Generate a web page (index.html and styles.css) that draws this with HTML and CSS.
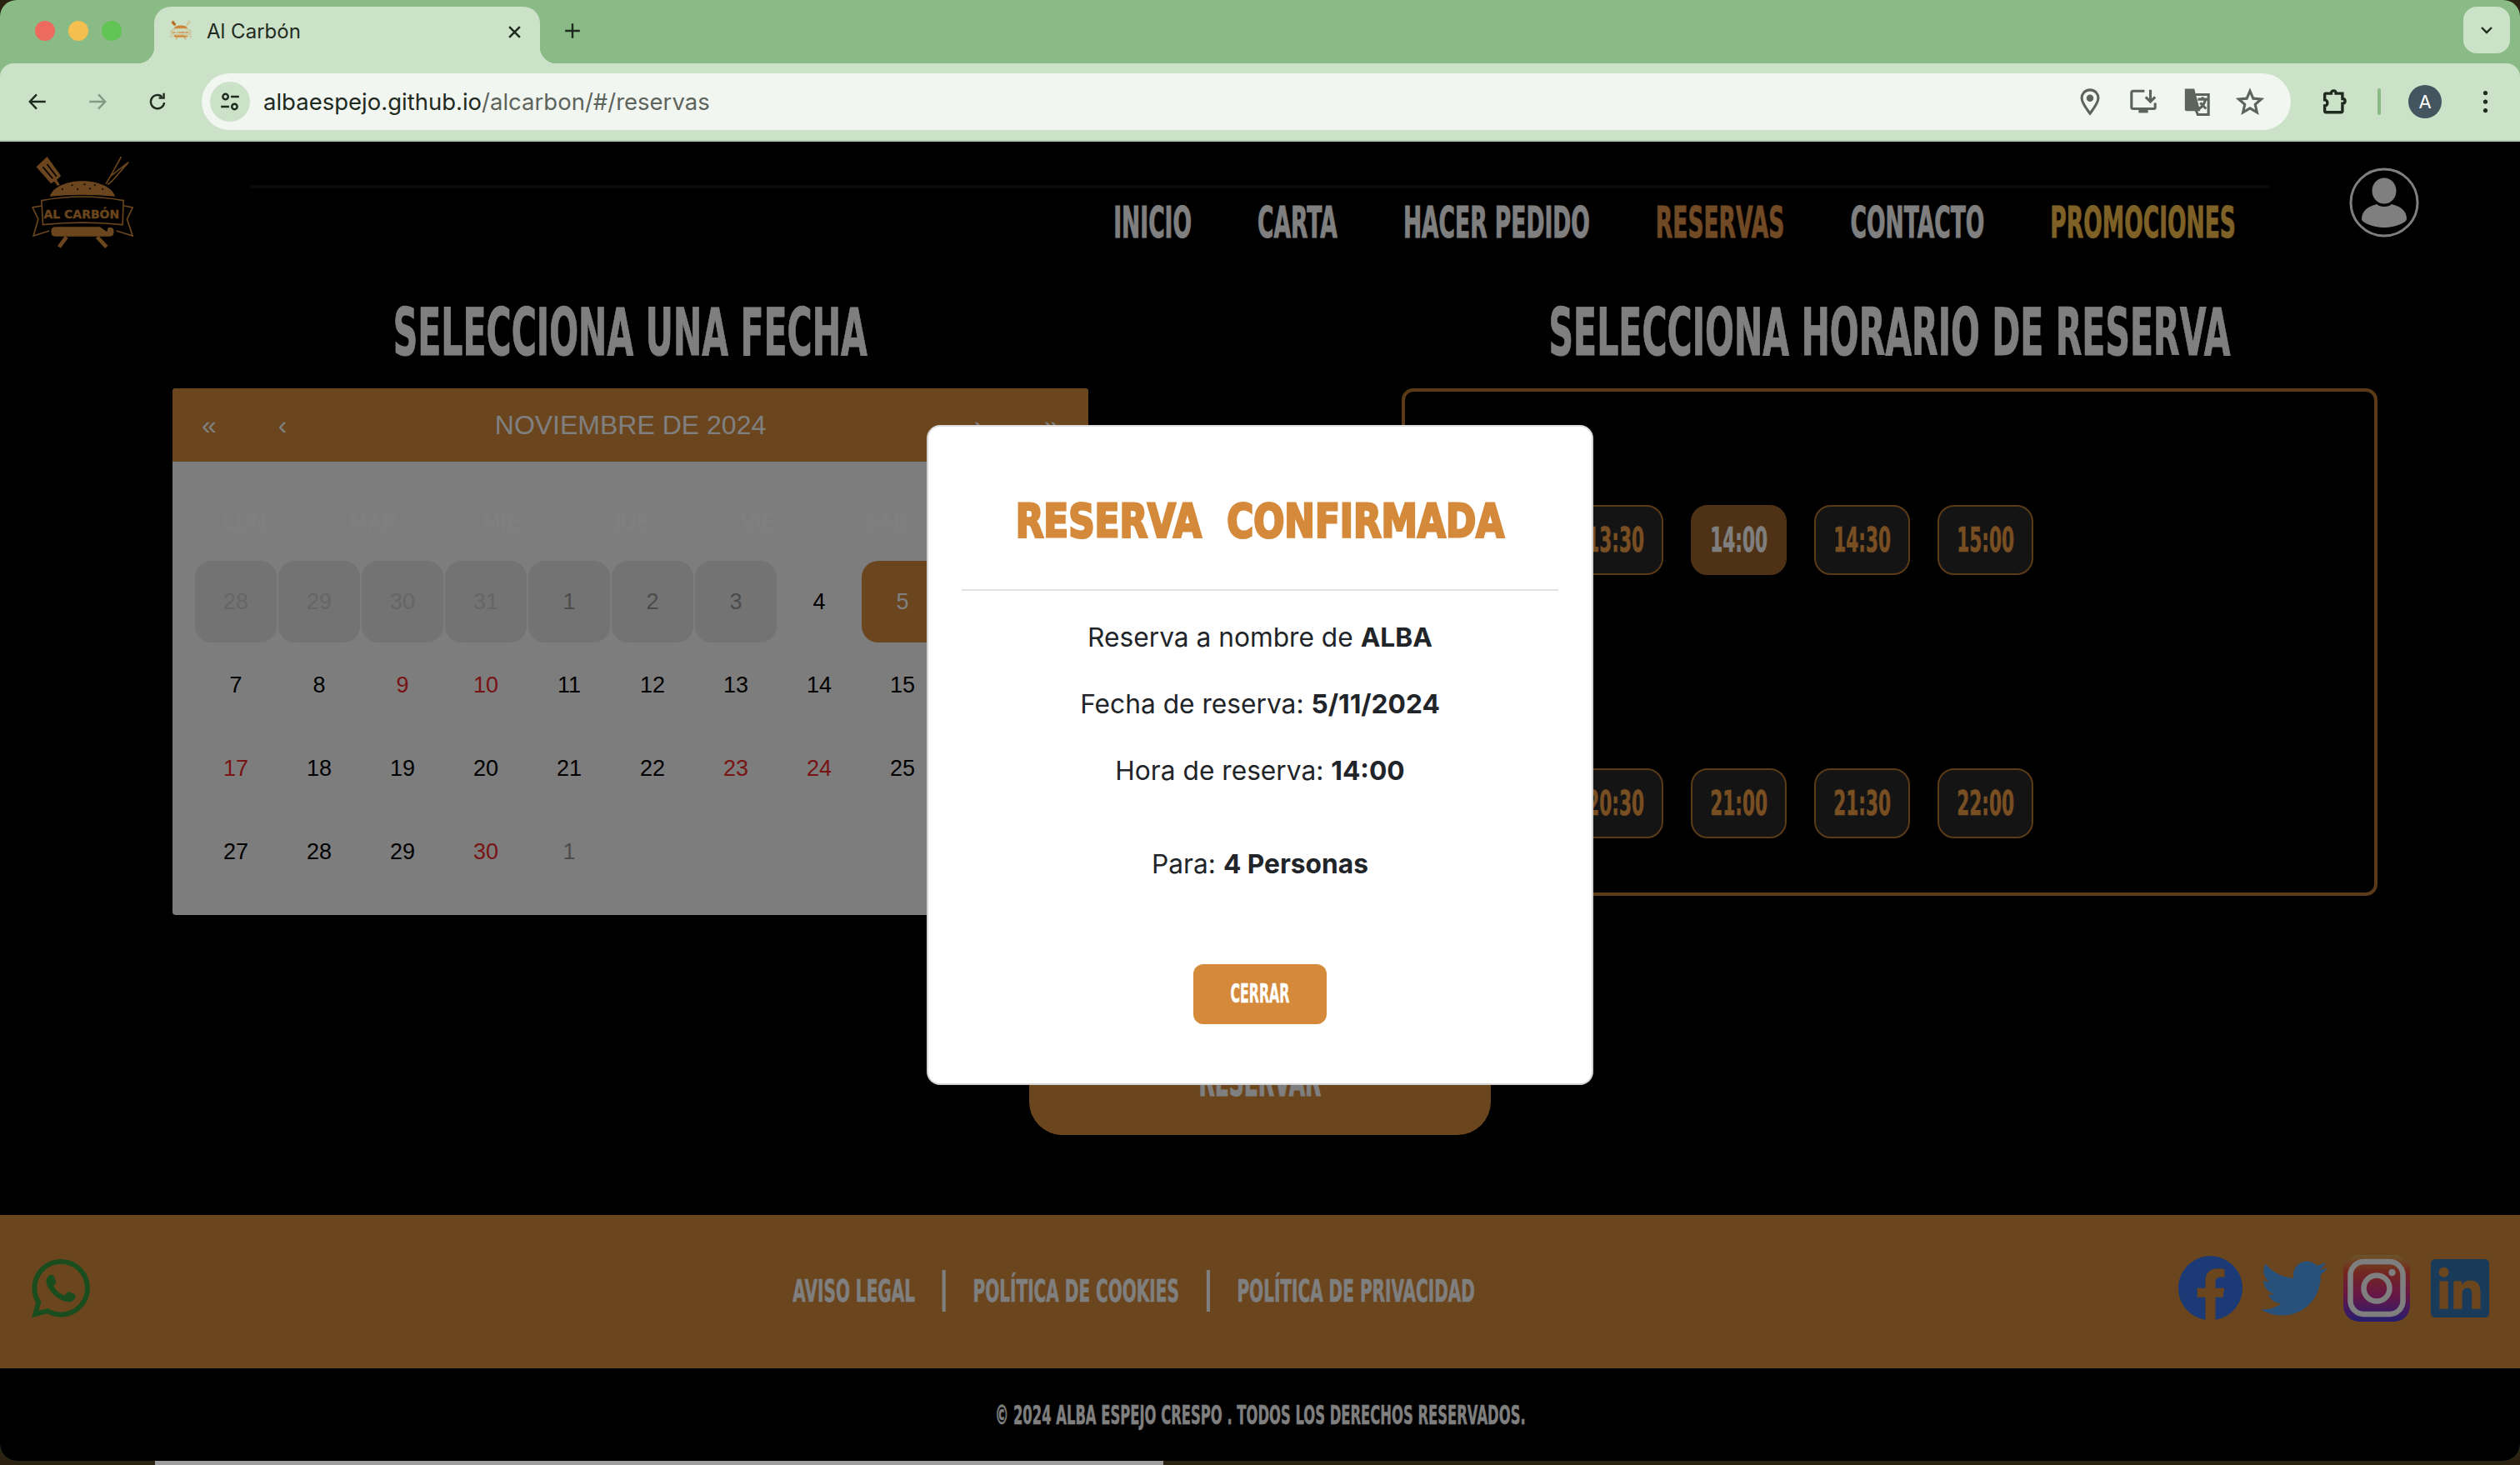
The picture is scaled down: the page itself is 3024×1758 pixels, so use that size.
FILE: index.html
```html
<!DOCTYPE html>
<html lang="es">
<head>
  <meta charset="UTF-8">
  <title>Al Carbón</title>
  <link rel="stylesheet" href="styles.css">
</head>
<body>

<svg class="defs" width="0" height="0">
  <symbol id="logo" viewBox="115 55 365 330">
    <path fill="currentColor" d="M131 92 170 55 220 124 205 138 216 156 208 160 196 144 184 152Z"/>
    <path stroke="#000" stroke-width="5" fill="none" d="M155 92 190 134M170 82 204 126"/>
    <path stroke="currentColor" stroke-width="5" fill="none" d="M382 153 398 126 437 55M398 126 463 75 405 142 388 156"/>
    <path fill="currentColor" d="M180 198C190 165 240 143 297 143 355 143 405 165 415 198 340 190 250 190 180 198Z"/>
    <g fill="#000"><circle cx="225" cy="172" r="3"/><circle cx="260" cy="158" r="3"/><circle cx="280" cy="172" r="3"/><circle cx="305" cy="155" r="3"/><circle cx="325" cy="170" r="3"/><circle cx="342" cy="157" r="3"/><circle cx="370" cy="172" r="3"/></g>
    <g fill="none" stroke="currentColor" stroke-width="5">
      <path d="M150 213Q297 185 445 213L442 300Q297 285 155 300Z"/>
      <path d="M150 232 118 238 138 280 121 340 178 322M447 232 478 238 458 280 478 340 420 322"/>
    </g>
    <text class="logo-word" x="158" y="276" textLength="272" lengthAdjust="spacingAndGlyphs" fill="currentColor">AL CARBÓN</text>
    <path fill="currentColor" d="M185 322Q185 308 200 308H360L385 325 390 310H398Q410 310 410 322V328Q410 342 396 342H199Q185 342 185 328Z"/>
    <path stroke="currentColor" stroke-width="14" d="M240 344 213 380M350 344 384 380"/>
  </symbol>
</svg>

<div class="wallpaper">
  <span class="wall-seg"></span>
</div>

<div class="window">

  <div class="tabstrip">
    <div class="lights">
      <span class="light light-close"></span>
      <span class="light light-min"></span>
      <span class="light light-max"></span>
    </div>
    <div class="tab">
      <svg class="favicon"><use href="#logo"/></svg>
      <span class="tab-title">Al Carbón</span>
      <svg class="tab-close" viewBox="0 0 16 16"><path d="M2 2 14 14M14 2 2 14"/></svg>
    </div>
    <svg class="new-tab" viewBox="0 0 20 20"><path d="M10 2V18M2 10H18"/></svg>
    <div class="tab-search">
      <svg viewBox="0 0 16 16"><path d="M2 5 8 11 14 5"/></svg>
    </div>
  </div>

  <div class="toolbar">
    <svg class="tb-icon" viewBox="0 0 24 24"><path d="M21 12H4M11 4 3.500 12 11 20"/></svg>
    <svg class="tb-icon dim" viewBox="0 0 24 24"><path d="M3 12H20M13 4 20.500 12 13 20"/></svg>
    <svg class="tb-icon" viewBox="0 0 24 24"><path d="M19.500 13A7.500 7.500 0 1 1 17 6.500M19 2.500V8H13.500"/></svg>
    <div class="omnibox">
      <span class="site-chip">
        <svg viewBox="0 0 24 24"><circle cx="7" cy="6.500" r="3"/><path d="M13 6.500H22M2 17.500H11"/><circle cx="17" cy="17.500" r="3"/></svg>
      </span>
      <span class="url"><span class="url-host">albaespejo.github.io</span>/alcarbon/#/reservas</span>
      <div class="omni-actions">
        <svg class="omni-icon" viewBox="0 0 24 24"><path d="M12 2C7.500 2 5 5.500 5 9c0 4 4 9 7 13 3-4 7-9 7-13 0-3.500-2.500-7-7-7Z"/><circle class="solid" cx="12" cy="9" r="3"/></svg>
        <svg class="omni-icon" viewBox="0 0 24 24"><path d="M13 3H3.500Q2 3 2 4.500V17Q2 18 3.500 18H21Q22 18 22 17V13M18 2V11M14 8 18 12 22 8"/><path class="solid" d="M8 18H16V21.500H8Z"/></svg>
        <svg class="omni-icon" viewBox="0 0 24 24"><path class="solid" d="M2 1H10L15 20H3.500Q2 20 2 18.500Z"/><path d="M11 6H22V23H13L11 18M13 10H21M17 8V10M19.500 10C18.500 14 16 17 14 18M15 13 20 18"/></svg>
        <svg class="omni-icon" viewBox="0 0 24 24"><path d="M12 3 14.700 9.300 21.500 9.900 16.400 14.400 17.900 21 12 17.500 6.100 21 7.600 14.400 2.500 9.900 9.300 9.300Z"/></svg>
      </div>
    </div>
    <svg class="tb-icon puzzle" viewBox="0 0 24 24"><path d="M5 5H9.500C9.500 2 13.500 2 13.500 5H19V9.500C22 9.500 22 13.500 19 13.500V20Q19 21 18 21H5Q4 21 4 20V15.500C7 15.500 7 10.500 4 10.500V6Q4 5 5 5Z"/></svg>
    <span class="tb-sep"></span>
    <span class="avatar">A</span>
    <svg class="tb-dots" viewBox="0 0 8 32"><circle cx="4" cy="4" r="3"/><circle cx="4" cy="16" r="3"/><circle cx="4" cy="28" r="3"/></svg>
  </div>

  <div class="site">
    <header class="site-header">
      <a class="logo"><svg><use href="#logo"/></svg></a>
      <div class="nav-wrap">
        <nav class="nav">
          <a>INICIO</a>
          <a>CARTA</a>
          <a>HACER PEDIDO</a>
          <a class="current">RESERVAS</a>
          <a>CONTACTO</a>
          <a class="promo">PROMOCIONES</a>
        </nav>
      </div>
      <svg class="profile" viewBox="0 0 84 84">
        <circle class="ring" cx="42" cy="42" r="40"/>
        <ellipse cx="42" cy="28" rx="14.500" ry="15.500"/>
        <path d="M15 62C15 50 26 46 33 44 37 48 47 48 51 44 59 46 69 50 69 62 69 66 55 72 42 72 29 72 15 66 15 62Z"/>
      </svg>
    </header>

    <main>
      <div class="booking">
        <section class="col-date">
          <h2><span>SELECCIONA UNA FECHA</span></h2>
          <div class="calendar">
            <div class="cal-nav">
              <button>«</button>
              <button>‹</button>
              <span class="cal-label">NOVIEMBRE DE 2024</span>
              <button>›</button>
              <button>»</button>
            </div>
            <div class="weekdays">
              <abbr title="lunes">LUN</abbr>
              <abbr title="martes">MAR</abbr>
              <abbr title="miércoles">MIÉ</abbr>
              <abbr title="jueves">JUE</abbr>
              <abbr title="viernes">VIE</abbr>
              <abbr title="sábado">SÁB</abbr>
              <abbr title="domingo">DOM</abbr>
            </div>
            <div class="days">
              <span class="day off faint">28</span>
              <span class="day off faint">29</span>
              <span class="day off faint">30</span>
              <span class="day off faint">31</span>
              <span class="day off">1</span>
              <span class="day off">2</span>
              <span class="day off">3</span>
              <span class="day">4</span>
              <span class="day picked">5</span>
              <span class="day">6</span>
              <span class="day">7</span>
              <span class="day">8</span>
              <span class="day holiday">9</span>
              <span class="day holiday">10</span>
              <span class="day">11</span>
              <span class="day">12</span>
              <span class="day">13</span>
              <span class="day">14</span>
              <span class="day">15</span>
              <span class="day">16</span>
              <span class="day holiday">17</span>
              <span class="day">18</span>
              <span class="day">19</span>
              <span class="day">20</span>
              <span class="day">21</span>
              <span class="day">22</span>
              <span class="day holiday">23</span>
              <span class="day holiday">24</span>
              <span class="day">25</span>
              <span class="day">26</span>
              <span class="day">27</span>
              <span class="day">28</span>
              <span class="day">29</span>
              <span class="day holiday">30</span>
              <span class="day next">1</span>
            </div>
          </div>
        </section>

        <section class="col-time">
          <h2><span>SELECCIONA HORARIO DE RESERVA</span></h2>
          <div class="hours">
            <div class="hour-row">
              <button class="hour"><span>13:00</span></button>
              <button class="hour"><span>13:30</span></button>
              <button class="hour picked"><span>14:00</span></button>
              <button class="hour"><span>14:30</span></button>
              <button class="hour"><span>15:00</span></button>
            </div>
            <div class="hour-row">
              <button class="hour"><span>20:00</span></button>
              <button class="hour"><span>20:30</span></button>
              <button class="hour"><span>21:00</span></button>
              <button class="hour"><span>21:30</span></button>
              <button class="hour"><span>22:00</span></button>
            </div>
          </div>
        </section>
      </div>
      <div class="reserve-row">
        <button class="reserve"><span>RESERVAR</span></button>
      </div>
    </main>

    <footer class="site-footer">
      <svg class="whatsapp" viewBox="0 0 24 24"><path d="M17.472 14.382c-.297-.149-1.758-.867-2.03-.967-.273-.099-.471-.148-.67.15-.197.297-.767.966-.94 1.164-.173.199-.347.223-.644.075-.297-.15-1.255-.463-2.39-1.475-.883-.788-1.48-1.761-1.653-2.059-.173-.297-.018-.458.13-.606.134-.133.298-.347.446-.52.149-.174.198-.298.298-.497.099-.198.05-.371-.025-.52-.075-.149-.669-1.612-.916-2.207-.242-.579-.487-.5-.669-.51-.173-.008-.371-.01-.57-.01-.198 0-.52.074-.792.372-.272.297-1.04 1.016-1.04 2.479 0 1.462 1.065 2.875 1.213 3.074.149.198 2.096 3.2 5.077 4.487.709.306 1.262.489 1.694.625.712.227 1.36.195 1.871.118.571-.085 1.758-.719 2.006-1.413.248-.694.248-1.289.173-1.413-.074-.124-.272-.198-.57-.347m-5.421 7.403h-.004a9.87 9.87 0 01-5.031-1.378l-.361-.214-3.741.982.998-3.648-.235-.374a9.86 9.86 0 01-1.51-5.26c.001-5.45 4.436-9.884 9.888-9.884 2.64 0 5.122 1.03 6.988 2.898a9.825 9.825 0 012.893 6.994c-.003 5.45-4.437 9.884-9.885 9.884m8.413-18.297A11.815 11.815 0 0012.05 0C5.495 0 .16 5.335.157 11.892c0 2.096.547 4.142 1.588 5.945L.057 24l6.305-1.654a11.882 11.882 0 005.683 1.448h.005c6.554 0 11.89-5.335 11.893-11.893a11.821 11.821 0 00-3.48-8.413Z"/></svg>
      <div class="legal">
        <a>AVISO LEGAL</a>
        <i></i>
        <a>POLÍTICA DE COOKIES</a>
        <i></i>
        <a>POLÍTICA DE PRIVACIDAD</a>
      </div>
      <div class="social">
        <svg class="fb" viewBox="0 0 24 24"><path d="M24 12.073c0-6.627-5.373-12-12-12s-12 5.373-12 12c0 5.99 4.388 10.954 10.125 11.854v-8.385H7.078v-3.47h3.047V9.43c0-3.007 1.792-4.669 4.533-4.669 1.312 0 2.686.235 2.686.235v2.953H15.83c-1.491 0-1.956.925-1.956 1.874v2.25h3.328l-.532 3.47h-2.796v8.385C19.612 23.027 24 18.062 24 12.073z"/></svg>
        <svg class="tw" viewBox="0 0 24 24"><path d="M23.953 4.57a10 10 0 01-2.825.775 4.958 4.958 0 002.163-2.723c-.951.555-2.005.959-3.127 1.184a4.92 4.92 0 00-8.384 4.482C7.69 8.095 4.067 6.13 1.64 3.162a4.822 4.822 0 00-.666 2.475c0 1.71.87 3.213 2.188 4.096a4.904 4.904 0 01-2.228-.616v.06a4.923 4.923 0 003.946 4.827 4.996 4.996 0 01-2.212.085 4.936 4.936 0 004.604 3.417 9.867 9.867 0 01-6.102 2.105c-.39 0-.779-.023-1.17-.067a13.995 13.995 0 007.557 2.209c9.053 0 13.998-7.496 13.998-13.985 0-.21 0-.42-.015-.63A9.935 9.935 0 0024 4.59z"/></svg>
        <svg class="ig" viewBox="0 0 80 80">
          <defs>
            <linearGradient id="ig-grad" x1="0" y1="0" x2="0" y2="1">
              <stop offset="0" stop-color="#d8a850"/>
              <stop offset=".25" stop-color="#e8503c"/>
              <stop offset=".6" stop-color="#d02c8c"/>
              <stop offset="1" stop-color="#4a3ce0"/>
            </linearGradient>
          </defs>
          <rect width="80" height="80" rx="19" fill="url(#ig-grad)"/>
          <rect x="8.500" y="8" width="63" height="63" rx="16" fill="none" stroke="#fff" stroke-width="6.500"/>
          <circle cx="40" cy="40" r="15.500" fill="none" stroke="#fff" stroke-width="6.500"/>
          <circle cx="58.500" cy="21" r="4.200" fill="#fff"/>
        </svg>
        <svg class="in" viewBox="0 0 24 24"><path d="M20.447 20.452h-3.554v-5.569c0-1.328-.027-3.037-1.852-3.037-1.853 0-2.136 1.445-2.136 2.939v5.667H9.351V9h3.414v1.561h.046c.477-.9 1.637-1.85 3.37-1.85 3.601 0 4.267 2.37 4.267 5.455v6.286zM5.337 7.433a2.062 2.062 0 01-2.063-2.065 2.064 2.064 0 112.063 2.065zm1.782 13.019H3.555V9h3.564v11.452zM22.225 0H1.771C.792 0 0 .774 0 1.729v20.542C0 23.227.792 24 1.771 24h20.451C23.2 24 24 23.227 24 22.271V1.729C24 .774 23.2 0 22.222 0h.003z"/></svg>
      </div>
    </footer>

    <div class="copyright"><span>© 2024 ALBA ESPEJO CRESPO . TODOS LOS DERECHOS RESERVADOS.</span></div>

    <div class="overlay">
      <div class="modal">
        <div class="modal-head">
          <h3><span>RESERVA&nbsp;&nbsp;CONFIRMADA</span></h3>
        </div>
        <div class="modal-body">
          <p>Reserva a nombre de <b>ALBA</b></p>
          <p>Fecha de reserva: <b>5/11/2024</b></p>
          <p>Hora de reserva: <b>14:00</b></p>
          <p class="party">Para: <b>4 Personas</b></p>
          <button class="close"><span>CERRAR</span></button>
        </div>
      </div>
    </div>
  </div>
</div>

</body>
</html>
```

FILE: styles.css
```css
* { box-sizing: border-box; }
html, body { margin: 0; height: 100%; }
body {
  position: relative;
  overflow: hidden;
  background: #2a2110;
  font-family: "Liberation Sans", sans-serif;
}
button { border: 0; padding: 0; font: inherit; cursor: pointer; }
.defs { position: absolute; }

.wallpaper {
  position: absolute;
  left: 0;
  right: 0;
  bottom: 0;
  height: 6px;
  padding-left: 186px;
  display: flex;
}
.wall-seg { width: 1210px; background: #9c9c9c; }

.window {
  position: relative;
  height: 1753px;
  display: flex;
  flex-direction: column;
  border-radius: 20px;
  overflow: hidden;
  background: #8aba85;
}

/* navegador */
.tabstrip {
  height: 76px;
  flex: none;
  display: flex;
  padding-top: 8px;
  padding-left: 42px;
}
.lights { display: flex; gap: 16px; padding-top: 17px; width: 143px; }
.light { width: 24px; height: 24px; border-radius: 50%; }
.light-close { background: #ec6a5e; }
.light-min { background: #f5bf4f; }
.light-max { background: #61c454; }
.tab {
  position: relative;
  width: 463px;
  background: #cbe2c8;
  border-radius: 20px 20px 0 0;
  display: flex;
  align-items: flex-start;
  padding: 16px 22px 0 19px;
  color: #1f2a1f;
}
.tab::before, .tab::after {
  content: "";
  position: absolute;
  bottom: 0;
  width: 20px;
  height: 20px;
}
.tab::before { left: -20px; background: radial-gradient(circle at 0 0, transparent 20px, #cbe2c8 20.500px); }
.tab::after { right: -20px; background: radial-gradient(circle at 100% 0, transparent 20px, #cbe2c8 20.500px); }
.favicon { width: 26px; height: 24px; color: #d48a3a; }
.tab-title { margin-left: 18px; font: 24px/28px Inter, sans-serif; flex: 1; }
.tab-close { width: 17px; height: 17px; margin-top: 6px; fill: none; stroke: #1f2a1f; stroke-width: 2.400; }
.new-tab { width: 22px; height: 22px; margin: 18px 0 0 28px; fill: none; stroke: #1f2a1f; stroke-width: 2.200; }
.tab-search {
  width: 56px;
  height: 56px;
  margin-left: auto;
  margin-right: 12px;
  background: #cbe2c8;
  border-radius: 16px;
  display: flex;
  align-items: center;
  justify-content: center;
}
.tab-search svg { width: 16px; height: 16px; fill: none; stroke: #1f2a1f; stroke-width: 2.400; }

.toolbar {
  height: 94px;
  flex: none;
  display: flex;
  align-items: center;
  padding: 0 0 0 32px;
  background: #cbe2c8;
  border-bottom: 2px solid #b4c9b1;
  border-radius: 16px 16px 0 0;
}
.tb-icon { width: 26px; height: 26px; margin-right: 46px; fill: none; stroke: #1f2a1f; stroke-width: 2.200; }
.tb-icon.dim { stroke: #849a84; }
.omnibox {
  width: 2507px;
  height: 68px;
  margin-left: -6px;
  display: flex;
  align-items: center;
  padding-left: 10px;
  background: #f1f7f0;
  border-radius: 34px;
}
.site-chip {
  width: 48px;
  height: 48px;
  border-radius: 50%;
  background: #cbe2c8;
  display: flex;
  align-items: center;
  justify-content: center;
}
.site-chip svg { width: 26px; height: 26px; fill: none; stroke: #1f2a1f; stroke-width: 2.200; }
.url { margin-left: 16px; font: 27.500px/34px Inter, sans-serif; color: #5d635d; }
.url-host { color: #1f2a1f; }
.omni-actions { margin-left: auto; display: flex; gap: 30px; padding-right: 32px; }
.omni-icon { width: 34px; height: 34px; fill: none; stroke: #5d635d; stroke-width: 2.200; }
.omni-icon .solid { fill: #5d635d; stroke: none; }
.puzzle { width: 34px; height: 34px; margin: 0 0 0 35px; stroke-width: 2.400; }
.tb-sep { width: 4px; height: 32px; margin-left: 35px; background: #8aba85; border-radius: 2px; }
.avatar {
  width: 40px;
  height: 40px;
  margin-left: 33px;
  border-radius: 50%;
  background: #44555f;
  color: #fff;
  font: 22px/40px Inter, sans-serif;
  text-align: center;
}
.tb-dots { width: 7px; height: 28px; margin-left: 49px; fill: #1f2a1f; }

/* pagina */
.site {
  position: relative;
  flex: 1;
  display: flex;
  flex-direction: column;
  background: #000;
  color: #fff;
}
.site-header {
  height: 176px;
  flex: none;
  display: flex;
  align-items: flex-start;
  padding: 0 121px 0 38px;
}
.logo { margin-top: 18px; color: #d48a3a; }
.logo svg { display: block; width: 122px; height: 110px; }
.logo-word {
  font: 700 44px "DejaVu Sans", sans-serif;
  stroke: currentColor;
  stroke-width: 1px;
}
.nav-wrap {
  flex: 1;
  min-width: 0;
  margin: 52px 96px 0 140px;
  border-top: 4px solid #141414;
}
.nav {
  display: flex;
  justify-content: flex-end;
  gap: 152px;
  margin-top: 12px;
  padding-right: 77px;
  transform: scaleX(.52);
  transform-origin: right;
  font: 700 51px/60px "DejaVu Sans", sans-serif;
  -webkit-text-stroke: 1px currentColor;
  white-space: nowrap;
}
.nav .current { color: #e0924a; }
.nav .promo { color: #fac24e; }
.profile { flex: none; width: 84px; height: 84px; margin-top: 31px; fill: #fff; }
.profile .ring { fill: none; stroke: #fff; stroke-width: 3; }

main { flex: none; }
.booking { display: flex; align-items: flex-start; height: 752px; padding-left: 207px; }
h2 {
  margin: 0 0 20px;
  height: 100px;
  padding-top: 6px;
  display: flex;
  justify-content: center;
  font: 700 79px/94px "DejaVu Sans", sans-serif;
  -webkit-text-stroke: 1px currentColor;
  white-space: nowrap;
}
h2 span { flex: none; transform: scaleX(.52); }
.col-date { width: 1099px; }
.col-time { width: 1171px; margin-left: 376px; }

.calendar {
  height: 632px;
  background: #fafafa;
  color: #000;
  border-radius: 4px;
  overflow: hidden;
}
.cal-nav {
  height: 88px;
  display: flex;
  align-items: center;
  background: #d48a3a;
  color: #fff;
  font-size: 32px;
}
.cal-nav button { width: 88px; height: 88px; background: none; color: #fff; }
.cal-label { flex: 1; text-align: center; font-size: 32px; }
.weekdays {
  display: grid;
  grid-template-columns: repeat(7, 154px);
  margin: 52px 10px 26px;
  height: 40px;
  align-items: center;
  text-align: center;
  font-size: 25px;
  font-weight: 700;
  color: #fff;
}
.days {
  display: grid;
  grid-template-columns: repeat(10, 100px);
  grid-auto-rows: 100px;
  margin-left: 26px;
  font-size: 27px;
}
.day {
  margin: 1px;
  display: flex;
  align-items: center;
  justify-content: center;
  border-radius: 20px;
}
.day.off { background: #e6e6e6; color: #999; }
.day.faint { color: #ccc; }
.day.next { color: #999; }
.day.holiday { color: #f02828; }
.day.picked { background: #d48a3a; color: #fff; }

.hours {
  height: 609px;
  padding: 136px 47px 0;
  border: 4px solid #b4742e;
  border-radius: 14px;
}
.hour-row { display: flex; gap: 33px; height: 84px; margin-bottom: 232px; }
.hour {
  width: 115px;
  height: 84px;
  display: flex;
  align-items: center;
  justify-content: center;
  background: #282828;
  border: 2px solid #b4742e;
  border-radius: 20px;
  color: #f09e44;
  font: 700 40px/1 "DejaVu Sans", sans-serif;
  -webkit-text-stroke: .6px currentColor;
}
.hour span { flex: none; transform: scaleX(.54); }
.hour.picked { background: #9e642a; border-color: #9e642a; color: #fff; }

.reserve-row { display: flex; justify-content: center; margin-top: 130px; }
.reserve {
  width: 554px;
  height: 134px;
  padding-top: 6px;
  background: #d48a3a;
  border-radius: 40px;
  color: #fff;
  font: 700 50px/1 "DejaVu Sans", sans-serif;
  -webkit-text-stroke: 1px currentColor;
}
.reserve span { display: inline-block; transform: scaleX(.5); }

.site-footer {
  height: 184px;
  flex: none;
  margin-top: 96px;
  display: flex;
  align-items: center;
  justify-content: space-between;
  padding: 0 37px 0 38px;
  background: #d48a3a;
}
.whatsapp { width: 70px; height: 70px; margin-top: -8px; fill: #349a3c; }
.legal {
  display: flex;
  align-items: center;
  gap: 62px;
  margin-top: -3px;
  transform: scaleX(.527);
  font: 700 38px/50px "DejaVu Sans", sans-serif;
  -webkit-text-stroke: .6px currentColor;
  white-space: nowrap;
}
.legal i { width: 8px; height: 50px; background: #fff; }
.social { display: flex; align-items: center; gap: 22px; margin-top: -9px; }
.social svg { display: block; }
.fb { width: 77px; height: 77px; fill: #3874ea; }
.tw { width: 80px; height: 80px; margin-right: -3px; fill: #4ea0f4; }
.ig { width: 80px; height: 80px; }
.in { width: 70px; height: 70px; margin-left: 3px; fill: #3474b4; }

.copyright {
  height: 111px;
  flex: none;
  padding-top: 36px;
  display: flex;
  justify-content: center;
  font: 700 31.500px/40px "DejaVu Sans", sans-serif;
  -webkit-text-stroke: .4px currentColor;
  white-space: nowrap;
}
.copyright span { flex: none; transform: scaleX(.52); }

/* modal */
.overlay {
  position: absolute;
  inset: 0;
  display: flex;
  justify-content: center;
  align-items: flex-start;
  padding-top: 340px;
  background: rgba(0, 0, 0, .5);
}
.modal {
  width: 800px;
  height: 792px;
  background: #fff;
  border-radius: 16px;
  border: 2px solid #d4d4d4;
  border-top-color: #ddd;
  color: #212529;
  font-family: Inter, sans-serif;
}
.modal-head {
  height: 197px;
  margin: 0 40px;
  padding-top: 30px;
  display: flex;
  align-items: center;
  justify-content: center;
  border-bottom: 2px solid #e0e0e6;
}
h3 {
  margin: 0;
  font: 700 56px/1 "DejaVu Sans", sans-serif;
  color: #d48a3a;
  -webkit-text-stroke: 3px #d48a3a;
  white-space: nowrap;
}
h3 span { display: inline-block; transform: scaleX(.78); }
.modal-body { padding-top: 36px; text-align: center; font-size: 31.700px; line-height: 40px; }
.modal-body p { margin: 0 0 40px; }
.modal-body b { font-weight: 700; }
.modal-body .party { margin: 72px 0 100px; }
.close {
  width: 160px;
  height: 72px;
  background: #d48a3a;
  border-radius: 12px;
  color: #fff;
  font: 700 31.500px/1 "DejaVu Sans", sans-serif;
  -webkit-text-stroke: .5px currentColor;
}
.close span { display: inline-block; transform: scaleX(.5); }
```
